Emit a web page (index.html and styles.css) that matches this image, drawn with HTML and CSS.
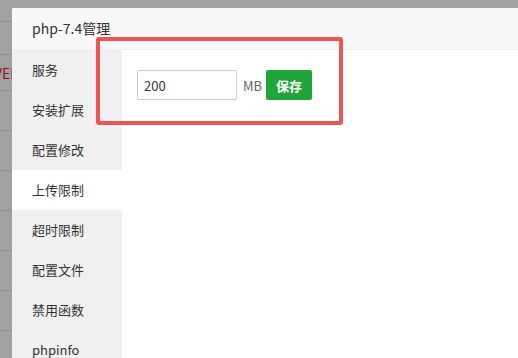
FILE: index.html
```html
<!DOCTYPE html>
<html>
<head>
<meta charset="utf-8">
<link rel="stylesheet" href="styles.css">
</head>
<body>
<div class="page">
  <div class="row r1"></div>
  <div class="row r2"></div>
  <div class="row r3"><span class="red">VER</span></div>
  <div class="row"></div>
  <div class="row"></div>
  <div class="row"></div>
  <div class="row"></div>
  <div class="row"></div>
  <div class="row"></div>
</div>
<div class="modal">
  <div class="modal-head">php-7.4管理</div>
  <div class="modal-body">
    <ul class="side">
      <li>服务</li>
      <li>安装扩展</li>
      <li>配置修改</li>
      <li class="active">上传限制</li>
      <li>超时限制</li>
      <li>配置文件</li>
      <li>禁用函数</li>
      <li>phpinfo</li>
    </ul>
    <div class="content">
      <div class="form-line">
        <input class="num" type="text" value="200">
        <span class="unit">MB</span>
        <button class="btn">保存</button>
      </div>
    </div>
  </div>
</div>
<div class="mark"></div>
</body>
</html>
```
FILE: styles.css
```css
html, body {
  margin: 0;
  padding: 0;
  width: 518px;
  height: 358px;
  overflow: hidden;
  background: #a1a1a1;
  font-family: "Noto Sans CJK SC", "Noto Sans", sans-serif;
}
.page {
  display: flex;
  flex-direction: column;
}
.row {
  height: 39px;
  border-bottom: 1px solid #8e8e8e;
  display: flex;
  align-items: center;
  font-size: 13px;
}
.r1 { height: 21px; }
.r2 { height: 32px; }
.r3 { height: 35px; }
.red {
  color: #8a1a1a;
  margin-left: -6px;
  font-size: 14px;
}
.modal {
  position: absolute;
  left: 12px;
  top: 8px;
  right: 0;
  bottom: 0;
  overflow: hidden;
  background: #fff;
  border-radius: 2px 0 0 0;
  display: flex;
  flex-direction: column;
}
.modal-head {
  flex: none;
  height: 41px;
  line-height: 41px;
  padding-left: 20px;
  background: #f8f8f8;
  border-bottom: 1px solid #eee;
  font-size: 14px;
  color: #333;
}
.modal-body {
  flex: 1;
  display: flex;
}
.side {
  list-style: none;
  margin: 0;
  padding: 0;
  width: 110px;
  background: #f0f0f0;
}
.side li {
  height: 40px;
  line-height: 40px;
  padding-left: 20px;
  font-size: 13px;
  color: #333;
}
.side li.active {
  background: #fff;
}
.content {
  flex: 1;
  padding: 20px 15px;
}
.form-line {
  display: flex;
  align-items: center;
}
.num {
  box-sizing: border-box;
  width: 100px;
  height: 30px;
  border: 1px solid #ccc;
  border-radius: 2px;
  padding: 0 6px;
  font-family: inherit;
  font-size: 13px;
  color: #333;
  outline: none;
}
.unit {
  margin-left: 6px;
  font-size: 13px;
  color: #666;
}
.btn {
  margin-left: 4px;
  width: 46px;
  height: 30px;
  border: 0;
  border-radius: 2px;
  background: #20a53a;
  color: #fff;
  font-family: inherit;
  font-size: 13px;
  font-weight: bold;
  padding: 0;
}
.mark {
  position: absolute;
  left: 96px;
  top: 37px;
  width: 239px;
  height: 80px;
  border: 4px solid #f05353;
  border-radius: 3px;
}
```
